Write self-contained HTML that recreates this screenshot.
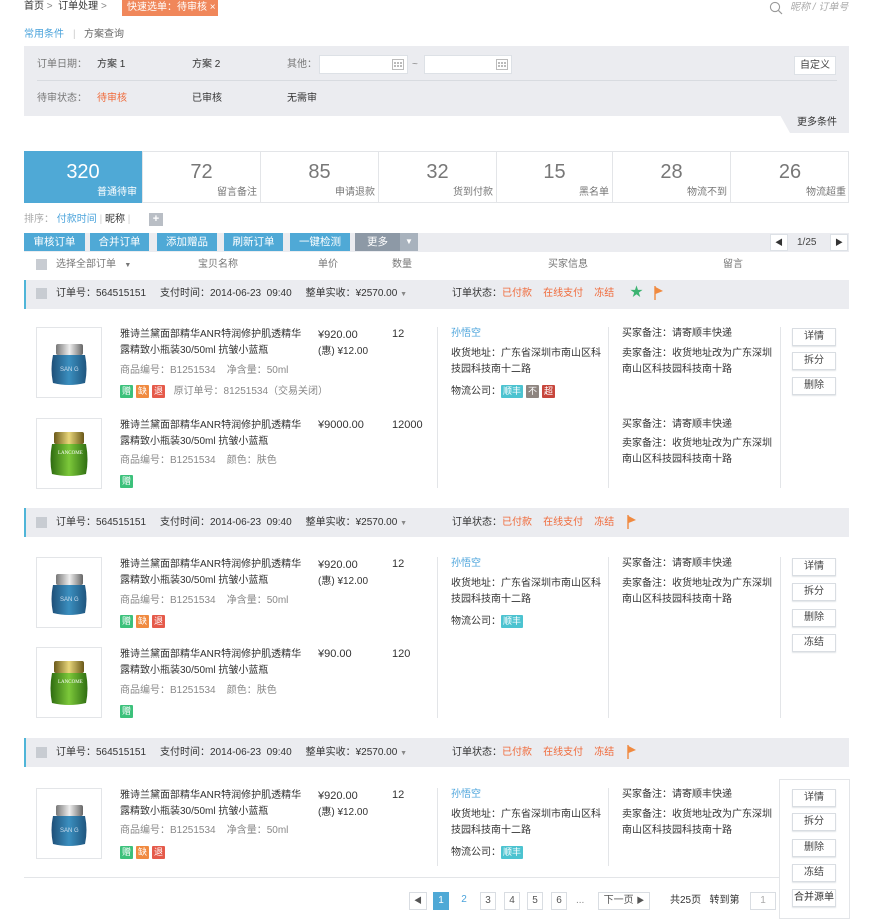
<!DOCTYPE html>
<html><head><meta charset="utf-8">
<style>
*{margin:0;padding:0;box-sizing:border-box}
body{width:873px;height:913px;overflow:hidden;background:#fff;position:relative;font-family:"Liberation Sans","Noto Sans CJK SC",sans-serif;font-size:10px;color:#333}
.a{position:absolute;white-space:nowrap;line-height:14px}
.g{color:#888}
.o{color:#f06a3a}
.b{color:#4aa3db}
.box{position:absolute;border:1px solid #dde1e6;background:#fff}
.btn{position:absolute;height:18px;background:#4fa9d6;color:#fff;text-align:center;line-height:18px;font-size:10.5px}
.wb{position:absolute;width:44px;height:18px;border:1px solid #d9dde2;background:#fff;text-align:center;line-height:16px;font-size:10px;color:#444;box-shadow:0 1px 1px #e2e5e8}
.tag{display:inline-block;width:13px;height:13px;line-height:13px;text-align:center;color:#fff;font-size:9px;margin-right:3px;border-radius:1px}
.oh{position:absolute;left:24px;width:825px;height:29px;background:#ebecf0;border-left:2px solid #4fb5d8}
.vl{position:absolute;width:1px;background:#e3e5e8}
.stat{position:absolute;top:152px;height:50px;border-left:1px solid #e3e5e8;text-align:right;color:#777}
.stat .n{position:absolute;top:8px;left:0;right:0;text-align:center;font-size:20px;color:#777;line-height:24px}
.stat .l{position:absolute;bottom:4px;right:3px;font-size:10px}
.pg{position:absolute;top:892px;height:18px;border:1px solid #d9dde2;text-align:center;line-height:16px;font-size:10px;color:#555;background:#fff}
</style></head><body>

<!-- breadcrumb -->
<div class="a" style="left:24px;top:0px;color:#333">首页 <span class="g">&gt;</span> &nbsp;订单处理 <span class="g">&gt;</span></div>
<div class="a" style="left:122px;top:0;width:96px;height:16px;background:#f0875a;color:#fff;padding-left:5px;line-height:15px">快速选单：待审核 ×</div>
<svg style="position:absolute;left:769px;top:1px" width="14" height="14"><circle cx="6" cy="6" r="4.6" fill="none" stroke="#999" stroke-width="1.1"/><line x1="9.4" y1="9.4" x2="13" y2="13" stroke="#999" stroke-width="1.2"/></svg>
<div class="a" style="left:790px;top:1px;color:#aaa;font-style:italic">昵称 / 订单号</div>

<div class="a b" style="left:24px;top:28px">常用条件</div>
<div class="a g" style="left:73px;top:28px;color:#ccc">|</div>
<div class="a" style="left:84px;top:28px;color:#666">方案查询</div>

<!-- filter panel -->
<div style="position:absolute;left:24px;top:46px;width:825px;height:70px;background:#ebecf0"></div>
<div style="position:absolute;left:780px;top:115px;width:69px;height:18px;background:#ebecf0;clip-path:polygon(0 0,100% 0,100% 100%,10px 100%)"></div>
<div class="a" style="left:37px;top:58px;color:#777">订单日期：</div>
<div class="a" style="left:97px;top:58px">方案 1</div>
<div class="a" style="left:192px;top:58px">方案 2</div>
<div class="a" style="left:287px;top:58px;color:#777">其他：</div>
<div class="box" style="left:319px;top:55px;width:89px;height:19px"></div>
<div class="box" style="left:424px;top:55px;width:88px;height:19px"></div>
<svg style="position:absolute;left:392px;top:58px" width="12" height="12"><rect x="0.5" y="1.5" width="11" height="10" fill="none" stroke="#bbb"/><g fill="#bbb"><rect x="2" y="4" width="2" height="2"/><rect x="5" y="4" width="2" height="2"/><rect x="8" y="4" width="2" height="2"/><rect x="2" y="7" width="2" height="2"/><rect x="5" y="7" width="2" height="2"/><rect x="8" y="7" width="2" height="2"/></g></svg>
<svg style="position:absolute;left:496px;top:58px" width="12" height="12"><rect x="0.5" y="1.5" width="11" height="10" fill="none" stroke="#bbb"/><g fill="#bbb"><rect x="2" y="4" width="2" height="2"/><rect x="5" y="4" width="2" height="2"/><rect x="8" y="4" width="2" height="2"/><rect x="2" y="7" width="2" height="2"/><rect x="5" y="7" width="2" height="2"/><rect x="8" y="7" width="2" height="2"/></g></svg>
<div class="a g" style="left:412px;top:58px">~</div>
<div class="box" style="left:794px;top:56px;width:42px;height:19px;text-align:center;line-height:17px;color:#444">自定义</div>
<div style="position:absolute;left:37px;top:80px;width:800px;height:1px;background:#d8dbe0"></div>
<div class="a" style="left:37px;top:92px;color:#777">待审状态：</div>
<div class="a o" style="left:97px;top:92px">待审核</div>
<div class="a" style="left:192px;top:92px">已审核</div>
<div class="a" style="left:287px;top:92px">无需审</div>
<div class="a" style="left:797px;top:116px">更多条件</div>

<!-- stats -->
<div style="position:absolute;left:24px;top:151px;width:825px;height:52px;border:1px solid #e3e5e8"></div>
<div class="stat" style="left:24px;width:118px;background:#4fa9d6;border:none;top:151px;height:52px"><div class="n" style="color:#fff;top:9px">320</div><div class="l" style="color:#fff;bottom:5px;right:5px">普通待审</div></div>
<div class="stat" style="left:142px;width:118px"><div class="n">72</div><div class="l">留言备注</div></div>
<div class="stat" style="left:260px;width:118px"><div class="n">85</div><div class="l">申请退款</div></div>
<div class="stat" style="left:378px;width:118px"><div class="n">32</div><div class="l">货到付款</div></div>
<div class="stat" style="left:496px;width:116px"><div class="n">15</div><div class="l">黑名单</div></div>
<div class="stat" style="left:612px;width:118px"><div class="n">28</div><div class="l">物流不到</div></div>
<div class="stat" style="left:730px;width:119px"><div class="n">26</div><div class="l">物流超重</div></div>

<!-- sort -->
<div class="a" style="left:24px;top:213px;color:#aaa">排序： <span class="b">付款时间</span> <span style="color:#ccc">|</span> <span style="color:#333">昵称</span> <span style="color:#ccc">|</span></div>
<div style="position:absolute;left:149px;top:213px;width:14px;height:13px;background:#b9bec5;color:#fff;text-align:center;line-height:13px;font-size:11px;font-weight:bold">+</div>

<!-- toolbar -->
<div style="position:absolute;left:24px;top:233px;width:825px;height:19px;background:#ebecf0"></div>
<div class="btn" style="left:24px;top:233px;width:61px">审核订单</div>
<div class="btn" style="left:90px;top:233px;width:59px">合并订单</div>
<div class="btn" style="left:157px;top:233px;width:60px">添加赠品</div>
<div class="btn" style="left:224px;top:233px;width:59px">刷新订单</div>
<div class="btn" style="left:290px;top:233px;width:60px">一键检测</div>
<div class="btn" style="left:355px;top:233px;width:45px;background:#8d99a6">更多</div>
<div class="btn" style="left:400px;top:233px;width:18px;background:#a8b2bd;font-size:8px">▼</div>
<div class="box" style="left:770px;top:234px;width:18px;height:17px;text-align:center;line-height:15px;font-size:8px;color:#333">◀</div>
<div class="a" style="left:797px;top:236px;color:#444">1/25</div>
<div class="box" style="left:830px;top:234px;width:18px;height:17px;text-align:center;line-height:15px;font-size:8px;color:#333">▶</div>

<!-- header -->
<div style="position:absolute;left:36px;top:259px;width:11px;height:11px;background:#c8ccd2"></div>
<div class="a" style="left:56px;top:258px;color:#777">选择全部订单 &nbsp;&nbsp;<span style="font-size:7px">▼</span></div>
<div class="a" style="left:198px;top:258px;color:#777">宝贝名称</div>
<div class="a" style="left:318px;top:258px;color:#777">单价</div>
<div class="a" style="left:392px;top:258px;color:#777">数量</div>
<div class="a" style="left:548px;top:258px;color:#777">买家信息</div>
<div class="a" style="left:723px;top:258px;color:#777">留言</div>

<svg width="0" height="0" style="position:absolute">
<defs>
<linearGradient id="bj" x1="0" x2="1"><stop offset="0" stop-color="#1e4f78"/><stop offset=".5" stop-color="#3b8fbf"/><stop offset="1" stop-color="#1f557e"/></linearGradient>
<linearGradient id="sc" x1="0" x2="1"><stop offset="0" stop-color="#777"/><stop offset=".5" stop-color="#eee"/><stop offset="1" stop-color="#666"/></linearGradient>
<linearGradient id="gj" x1="0" x2="1"><stop offset="0" stop-color="#2e6b10"/><stop offset=".5" stop-color="#7cc83a"/><stop offset="1" stop-color="#2f6e12"/></linearGradient>
<linearGradient id="gc" x1="0" x2="1"><stop offset="0" stop-color="#6b5a1a"/><stop offset=".5" stop-color="#e8d67a"/><stop offset="1" stop-color="#6a5818"/></linearGradient>
<symbol id="blue" viewBox="0 0 66 71"><rect x="0.5" y="0.5" width="65" height="70" fill="#fff" stroke="#e3e5e8"/><rect x="20" y="17" width="27" height="11" rx="2" fill="url(#sc)"/><path d="M17 28 H49 Q52 42 49 56 Q33 60 17 56 Q14 42 17 28Z" fill="url(#bj)"/><text x="24" y="44" font-size="6" fill="#cde" font-family="Liberation Sans">SAN G</text></symbol>
<symbol id="green" viewBox="0 0 66 71"><rect x="0.5" y="0.5" width="65" height="70" fill="#fff" stroke="#e3e5e8"/><rect x="18" y="14" width="30" height="12" rx="2" fill="url(#gc)"/><path d="M16 26 H50 Q53 42 50 56 Q33 60 16 56 Q13 42 16 26Z" fill="url(#gj)"/><text x="22" y="36" font-size="5" fill="#fff" font-family="Liberation Serif">LANCOME</text></symbol>
</defs></svg>

<!-- ORDER 1 -->
<div class="oh" style="top:280px"></div>
<div style="position:absolute;left:36px;top:288px;width:11px;height:11px;background:#c8ccd2"></div>
<div class="a" style="left:56px;top:287px">订单号：564515151 &nbsp;&nbsp;&nbsp; 支付时间：2014-06-23 &nbsp;09:40 &nbsp;&nbsp;&nbsp; 整单实收：¥2570.00 <span class="g" style="font-size:7px">▼</span></div>
<div class="a" style="left:452px;top:287px">订单状态：<span class="o">已付款</span> &nbsp;&nbsp; <span class="o">在线支付</span> &nbsp;&nbsp; <span class="o">冻结</span></div>
<div class="a" style="left:630px;top:285px;color:#3cb371;font-size:13px">★</div>
<svg style="position:absolute;left:654px;top:286px" width="10" height="14"><path d="M1 0V14" stroke="#f08a40" stroke-width="1.4"/><path d="M1.5 1L9 5L1.5 8Z" fill="#f08a40"/></svg>

<svg style="position:absolute;left:36px;top:327px" width="66" height="71"><use href="#blue"/></svg>
<div class="a" style="left:120px;top:327px;line-height:16px">雅诗兰黛面部精华ANR特润修护肌透精华<br>露精致小瓶装30/50ml 抗皱小蓝瓶</div>
<div class="a g" style="left:120px;top:364px">商品编号：B1251534 &nbsp;&nbsp; 净含量：50ml</div>
<div class="a" style="left:120px;top:385px"><span class="tag" style="background:#3cc17b">赠</span><span class="tag" style="background:#f08a40">缺</span><span class="tag" style="background:#e55a4a">退</span> &nbsp;<span class="g">原订单号：81251534（交易关闭）</span></div>
<div class="a" style="left:318px;top:327px;line-height:16px;font-size:11px">¥920.00<br><span style="font-size:10px">(惠) ¥12.00</span></div>
<div class="a" style="left:392px;top:327px;font-size:11px">12</div>
<div class="vl" style="left:437px;top:327px;height:161px"></div>
<div class="vl" style="left:608px;top:327px;height:161px"></div>
<div class="vl" style="left:780px;top:327px;height:161px"></div>
<div class="a b" style="left:451px;top:327px">孙悟空</div>
<div class="a" style="left:451px;top:346px;line-height:16px">收货地址：广东省深圳市南山区科<br>技园科技南十二路</div>
<div class="a" style="left:451px;top:385px">物流公司：<span class="tag" style="background:#4cc3d0;width:22px">顺丰</span><span class="tag" style="background:#8e8580">不</span><span class="tag" style="background:#c7463c">超</span></div>
<div class="a" style="left:622px;top:327px">买家备注：请寄顺丰快递</div>
<div class="a" style="left:622px;top:346px;line-height:16px">卖家备注：收货地址改为广东深圳<br>南山区科技园科技南十路</div>
<div class="wb b" style="left:792px;top:328px">详情</div>
<div class="wb" style="left:792px;top:352px">拆分</div>
<div class="wb" style="left:792px;top:377px">删除</div>

<svg style="position:absolute;left:36px;top:418px" width="66" height="71"><use href="#green"/></svg>
<div class="a" style="left:120px;top:418px;line-height:16px">雅诗兰黛面部精华ANR特润修护肌透精华<br>露精致小瓶装30/50ml 抗皱小蓝瓶</div>
<div class="a g" style="left:120px;top:454px">商品编号：B1251534 &nbsp;&nbsp; 颜色：肤色</div>
<div class="a" style="left:120px;top:475px"><span class="tag" style="background:#3cc17b">赠</span></div>
<div class="a" style="left:318px;top:418px;font-size:11px">¥9000.00</div>
<div class="a" style="left:392px;top:418px;font-size:11px">12000</div>
<div class="a" style="left:622px;top:418px">买家备注：请寄顺丰快递</div>
<div class="a" style="left:622px;top:436px;line-height:16px">卖家备注：收货地址改为广东深圳<br>南山区科技园科技南十路</div>

<!-- ORDER 2 -->
<div class="oh" style="top:508px"></div>
<div style="position:absolute;left:36px;top:517px;width:11px;height:11px;background:#c8ccd2"></div>
<div class="a" style="left:56px;top:516px">订单号：564515151 &nbsp;&nbsp;&nbsp; 支付时间：2014-06-23 &nbsp;09:40 &nbsp;&nbsp;&nbsp; 整单实收：¥2570.00 <span class="g" style="font-size:7px">▼</span></div>
<div class="a" style="left:452px;top:516px">订单状态：<span class="o">已付款</span> &nbsp;&nbsp; <span class="o">在线支付</span> &nbsp;&nbsp; <span class="o">冻结</span></div>
<svg style="position:absolute;left:627px;top:515px" width="10" height="14"><path d="M1 0V14" stroke="#f08a40" stroke-width="1.4"/><path d="M1.5 1L9 5L1.5 8Z" fill="#f08a40"/></svg>

<svg style="position:absolute;left:36px;top:557px" width="66" height="71"><use href="#blue"/></svg>
<div class="a" style="left:120px;top:557px;line-height:16px">雅诗兰黛面部精华ANR特润修护肌透精华<br>露精致小瓶装30/50ml 抗皱小蓝瓶</div>
<div class="a g" style="left:120px;top:594px">商品编号：B1251534 &nbsp;&nbsp; 净含量：50ml</div>
<div class="a" style="left:120px;top:615px"><span class="tag" style="background:#3cc17b">赠</span><span class="tag" style="background:#f08a40">缺</span><span class="tag" style="background:#e55a4a">退</span></div>
<div class="a" style="left:318px;top:557px;line-height:16px;font-size:11px">¥920.00<br><span style="font-size:10px">(惠) ¥12.00</span></div>
<div class="a" style="left:392px;top:557px;font-size:11px">12</div>
<div class="vl" style="left:437px;top:557px;height:161px"></div>
<div class="vl" style="left:608px;top:557px;height:161px"></div>
<div class="vl" style="left:780px;top:557px;height:161px"></div>
<div class="a b" style="left:451px;top:557px">孙悟空</div>
<div class="a" style="left:451px;top:576px;line-height:16px">收货地址：广东省深圳市南山区科<br>技园科技南十二路</div>
<div class="a" style="left:451px;top:615px">物流公司：<span class="tag" style="background:#4cc3d0;width:22px">顺丰</span></div>
<div class="a" style="left:622px;top:557px">买家备注：请寄顺丰快递</div>
<div class="a" style="left:622px;top:576px;line-height:16px">卖家备注：收货地址改为广东深圳<br>南山区科技园科技南十路</div>
<div class="wb b" style="left:792px;top:558px">详情</div>
<div class="wb" style="left:792px;top:583px">拆分</div>
<div class="wb" style="left:792px;top:609px">删除</div>
<div class="wb" style="left:792px;top:634px">冻结</div>

<svg style="position:absolute;left:36px;top:647px" width="66" height="71"><use href="#green"/></svg>
<div class="a" style="left:120px;top:647px;line-height:16px">雅诗兰黛面部精华ANR特润修护肌透精华<br>露精致小瓶装30/50ml 抗皱小蓝瓶</div>
<div class="a g" style="left:120px;top:684px">商品编号：B1251534 &nbsp;&nbsp; 颜色：肤色</div>
<div class="a" style="left:120px;top:705px"><span class="tag" style="background:#3cc17b">赠</span></div>
<div class="a" style="left:318px;top:647px;font-size:11px">¥90.00</div>
<div class="a" style="left:392px;top:647px;font-size:11px">120</div>

<!-- ORDER 3 -->
<div class="oh" style="top:738px"></div>
<div style="position:absolute;left:36px;top:747px;width:11px;height:11px;background:#c8ccd2"></div>
<div class="a" style="left:56px;top:746px">订单号：564515151 &nbsp;&nbsp;&nbsp; 支付时间：2014-06-23 &nbsp;09:40 &nbsp;&nbsp;&nbsp; 整单实收：¥2570.00 <span class="g" style="font-size:7px">▼</span></div>
<div class="a" style="left:452px;top:746px">订单状态：<span class="o">已付款</span> &nbsp;&nbsp; <span class="o">在线支付</span> &nbsp;&nbsp; <span class="o">冻结</span></div>
<svg style="position:absolute;left:627px;top:745px" width="10" height="14"><path d="M1 0V14" stroke="#f08a40" stroke-width="1.4"/><path d="M1.5 1L9 5L1.5 8Z" fill="#f08a40"/></svg>

<div style="position:absolute;left:779px;top:779px;width:71px;height:140px;border:1px solid #e3e5e8;background:#fff"></div>
<svg style="position:absolute;left:36px;top:788px" width="66" height="71"><use href="#blue"/></svg>
<div class="a" style="left:120px;top:788px;line-height:16px">雅诗兰黛面部精华ANR特润修护肌透精华<br>露精致小瓶装30/50ml 抗皱小蓝瓶</div>
<div class="a g" style="left:120px;top:824px">商品编号：B1251534 &nbsp;&nbsp; 净含量：50ml</div>
<div class="a" style="left:120px;top:846px"><span class="tag" style="background:#3cc17b">赠</span><span class="tag" style="background:#f08a40">缺</span><span class="tag" style="background:#e55a4a">退</span></div>
<div class="a" style="left:318px;top:788px;line-height:16px;font-size:11px">¥920.00<br><span style="font-size:10px">(惠) ¥12.00</span></div>
<div class="a" style="left:392px;top:788px;font-size:11px">12</div>
<div class="vl" style="left:437px;top:788px;height:78px"></div>
<div class="vl" style="left:608px;top:788px;height:78px"></div>
<div class="a b" style="left:451px;top:788px">孙悟空</div>
<div class="a" style="left:451px;top:807px;line-height:16px">收货地址：广东省深圳市南山区科<br>技园科技南十二路</div>
<div class="a" style="left:451px;top:846px">物流公司：<span class="tag" style="background:#4cc3d0;width:22px">顺丰</span></div>
<div class="a" style="left:622px;top:788px">买家备注：请寄顺丰快递</div>
<div class="a" style="left:622px;top:807px;line-height:16px">卖家备注：收货地址改为广东深圳<br>南山区科技园科技南十路</div>
<div class="wb b" style="left:792px;top:789px">详情</div>
<div class="wb" style="left:792px;top:813px">拆分</div>
<div class="wb" style="left:792px;top:839px">删除</div>
<div class="wb" style="left:792px;top:864px">冻结</div>
<div class="wb" style="left:792px;top:889px;color:#333">合并源单</div>
<div style="position:absolute;left:24px;top:877px;width:755px;height:1px;background:#e3e5e8"></div>

<!-- pagination -->
<div class="pg" style="left:409px;width:18px;font-size:8px">◀</div>
<div class="pg" style="left:433px;width:16px;background:#4fa9d6;color:#fff;border-color:#4fa9d6">1</div>
<div class="pg" style="left:456px;width:16px;border:none;color:#4aa3db">2</div>
<div class="pg" style="left:480px;width:16px">3</div>
<div class="pg" style="left:504px;width:16px">4</div>
<div class="pg" style="left:527px;width:16px">5</div>
<div class="pg" style="left:551px;width:16px">6</div>
<div class="a g" style="left:576px;top:894px">...</div>
<div class="pg" style="left:598px;width:52px">下一页 <span style="font-size:8px">▶</span></div>
<div class="a" style="left:670px;top:894px">共25页 &nbsp;&nbsp;转到第</div>
<div class="pg" style="left:750px;width:26px;color:#aaa">1</div>
</body></html>
